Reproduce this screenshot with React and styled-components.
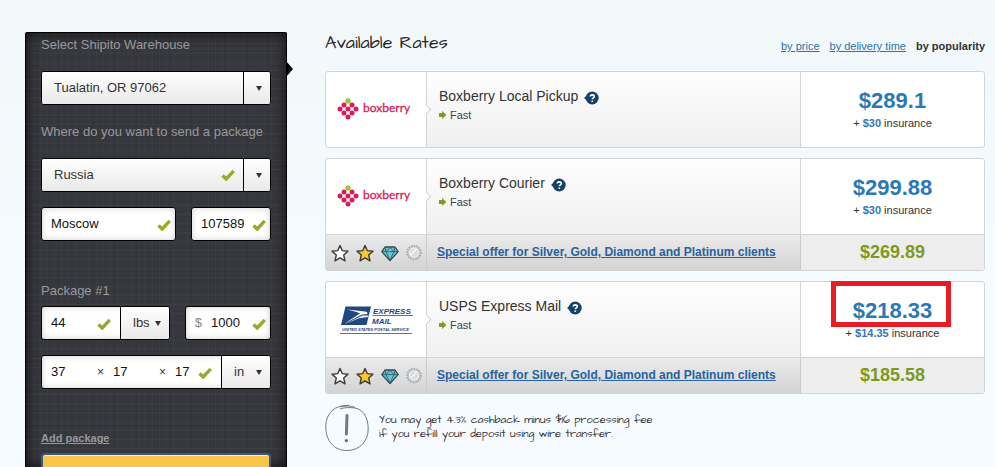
import React, { useState } from 'react';
import styled, { createGlobalStyle, css } from 'styled-components';

const GlobalStyle = createGlobalStyle`
  * {
    box-sizing: border-box;
  }

  body {
    margin: 0;
    background: linear-gradient(#f2f7fa, #f6fbff 300px);
    font-family: 'Liberation Sans', Arial, sans-serif;
    font-size: 13px;
    color: #333;
  }
`;

const Page = styled.div`
  display: flex;
  gap: 38px;
  height: 100vh;
  padding: 32px 10px 0 25px;
  overflow: hidden;
`;

const Sidebar = styled.form`
  position: relative;
  flex: 0 0 262px;
  min-width: 0;
  padding: 1px 15px 0;
  border: 1px solid #000;
  border-bottom: none;
  border-radius: 2px 2px 0 0;
  background:
    repeating-linear-gradient(90deg, rgba(255, 255, 255, 0.02) 0 1px, transparent 1px 7px),
    repeating-linear-gradient(0deg, rgba(0, 0, 0, 0.05) 0 1px, transparent 1px 5px),
    repeating-linear-gradient(90deg, rgba(0, 0, 0, 0.05) 0 1px, transparent 1px 11px),
    repeating-linear-gradient(0deg, rgba(255, 255, 255, 0.03) 0 1px, transparent 1px 9px),
    #37383d;
  box-shadow: inset 0 0 14px rgba(0, 0, 0, 0.75);

  &::after {
    content: '';
    position: absolute;
    top: 28px;
    left: 100%;
    border: 8px solid transparent;
    border-left: 7px solid #000;
    border-right: none;
  }
`;

const FieldLabel = styled.label`
  display: block;
  margin: ${(props) => props.$margin || '16px 0'};
  font-size: 13px;
  line-height: 21px;
  white-space: nowrap;
  color: #97989b;
`;

const FieldRow = styled.div`
  display: flex;
  gap: 15px;
  margin-bottom: 15px;
`;

const Group = styled.div`
  position: relative;
  display: flex;
  flex: ${(props) => props.$flex || '1'};
  min-width: 0;
  height: 34px;
  border: 1px solid #000;
  border-radius: 3px;
  background: #fff;
  box-shadow: inset 0 0 6px rgba(0, 0, 0, 0.2);
  overflow: hidden;
`;

const control = css`
  min-width: 0;
  height: 100%;
  border: none;
  outline: none;
  background: transparent;
  font-family: inherit;
  font-size: 13px;
  color: #333;
`;

const TextInput = styled.input`
  ${control}
  flex: ${(props) => props.$flex || '1'};
  padding: 0 0 2px 9px;
  color: #111;
`;

const Sign = styled.span`
  flex: none;
  width: ${(props) => props.$width || '7px'};
  text-align: right;
  font-size: ${(props) => props.$size || '12px'};
  line-height: 32px;
  color: ${(props) => props.$color || '#333'};
`;

const SelectBox = styled.div`
  position: relative;
  flex: ${(props) => props.$flex || '1'};
  border-left: ${(props) => (props.$divided ? '1px solid #000' : 'none')};
  background: linear-gradient(#fff, #e9e9e9);
`;

const Select = styled.select`
  ${control}
  width: 100%;
  padding: 0 ${(props) => (props.$short ? '12px' : '28px')} 2px 12px;
  appearance: none;
`;

const Caret = styled.span`
  position: absolute;
  top: 0;
  right: 0;
  display: flex;
  align-items: center;
  justify-content: center;
  width: ${(props) => (props.$line ? '27px' : '22px')};
  height: 100%;
  padding-left: ${(props) => (props.$line ? '4px' : '0')};
  border-left: ${(props) => (props.$line ? '1px solid #000' : 'none')};
  pointer-events: none;

  &::before {
    content: '';
    border: 3px solid transparent;
    border-top: 5px solid #333;
    border-bottom: none;
  }
`;

const CheckIcon = styled.svg`
  flex: none;
  align-self: center;
  width: 14px;
  height: 12px;
  margin: 2px ${(props) => props.$right || '4px'} 0 0;
`;

const OverCheck = styled(CheckIcon)`
  position: absolute;
  top: 10px;
  right: 35px;
  margin: 0;
  pointer-events: none;
`;

const AddLink = styled.a`
  display: inline-block;
  margin-top: 25px;
  font-size: 11px;
  font-weight: bold;
  line-height: 18px;
  color: #97989b;
`;

const SubmitButton = styled.button`
  display: block;
  width: 100%;
  height: 42px;
  margin-top: 6px;
  border: 2px solid #3c5788;
  border-radius: 4px;
  background: #f8c548;
  box-shadow: inset 0 1px 0 #fdeebd;
`;

const Main = styled.main`
  flex: 1;
  min-width: 0;
`;

const MainHeader = styled.header`
  display: flex;
  align-items: flex-start;
  justify-content: space-between;
  height: 28px;
  margin-bottom: 11px;
`;

const Heading = styled.h1`
  margin: 0;
  font-family: 'Architects Daughter', Lato, sans-serif;
  font-size: 18px;
  font-weight: normal;
  line-height: 22px;
  color: #2a2a2a;
`;

const SortList = styled.nav`
  display: flex;
  gap: 10px;
  font-size: 11px;
  line-height: 28px;

  a {
    color: #2a74ae;
  }
`;

const RateList = styled.ul`
  display: flex;
  flex-direction: column;
  gap: 10px;
  margin: 0;
  padding: 0;
  list-style: none;
`;

const RateCard = styled.li`
  border: 1px solid #d2d4d5;
  border-radius: 3px;
  background: #fff;
`;

const RateRow = styled.div`
  display: grid;
  grid-template-columns: 100px 1fr 183px;
  height: 75px;
`;

const LogoCell = styled.div`
  display: flex;
  align-items: center;
  padding-left: 10px;
`;

const InfoCell = styled.div`
  position: relative;
  padding: 14px 12px;
  border: solid #d2d4d5;
  border-width: 0 1px;
  background: linear-gradient(#fefefe, #f0f0f0);

  &::before {
    content: '';
    position: absolute;
    top: 34px;
    left: -4px;
    width: 6px;
    height: 6px;
    border: solid #d2d4d5;
    border-width: 1px 1px 0 0;
    background: #fff;
    transform: rotate(45deg);
  }
`;

const RateName = styled.h2`
  display: flex;
  align-items: center;
  gap: 6px;
  margin: 0;
  font-size: 14px;
  font-weight: normal;
  line-height: 20px;
`;

const Speed = styled.p`
  display: flex;
  align-items: center;
  gap: 3px;
  margin: 0;
  font-size: 11px;
  line-height: 18px;
  color: #444;
`;

const HelpButton = styled.button`
  display: flex;
  margin: 4px 0 0;
  padding: 0;
  border: none;
  background: none;
`;

const PriceCell = styled.div`
  padding-top: 17px;
  text-align: center;
`;

const Price = styled.strong`
  position: relative;
  display: inline-block;
  font-size: 22px;
  line-height: 24px;
  color: #2a78b4;

  ${(props) =>
    props.$marked &&
    css`
      &::after {
        content: '';
        position: absolute;
        inset: -18px -19px -4px -22px;
        border: 5px solid #e81c24;
      }
    `}
`;

const Insurance = styled.p`
  margin: 0;
  font-size: 11px;
  line-height: 20px;

  b {
    color: #3a74ae;
  }
`;

const OfferRow = styled.div`
  display: grid;
  grid-template-columns: 100px 1fr 183px;
  height: 36px;
  border-top: 1px solid #d2d4d5;
  background: linear-gradient(#ebebeb, #d3d3d3);
`;

const Badges = styled.div`
  display: flex;
  align-items: center;
  gap: 7px;
  padding-left: 5px;
`;

const OfferText = styled.div`
  padding-left: 10px;
  border: solid #c8cacb;
  border-width: 0 1px;
  font-size: 12px;
  font-weight: bold;
  line-height: 34px;
  white-space: nowrap;

  a {
    color: #2862a0;
  }
`;

const OfferPrice = styled.strong`
  background: #ededed;
  font-size: 18px;
  line-height: 34px;
  text-align: center;
  color: #7c9a1c;
`;

const Note = styled.div`
  display: flex;
  gap: 10px;
  margin-top: 10px;
  font-family: 'Architects Daughter', Lato, sans-serif;
  font-size: 11px;
  line-height: 14px;
  color: #333;

  p {
    margin: 9px 0 0;
  }
`;

const checkPath = <path d="M1.5 6.5L5.2 10L12.8 1.8" fill="none" stroke="#95ab2c" strokeWidth="3.4" />;

const Check = (props) => (
  <CheckIcon viewBox="0 0 14 12" aria-hidden="true" {...props}>
    {checkPath}
  </CheckIcon>
);

const BoxberryLogo = () => {
  const dots = [
    [8, 7], [16, 7],
    [4, 11], [12, 11], [20, 11],
    [8, 15], [16, 15],
    [12, 19],
  ];

  return (
    <svg width="78" height="24" viewBox="0 0 78 24" role="img" aria-label="boxberry">
      <circle cx="12" cy="3" r="2.7" fill="#9fc53c" />
      {dots.map(([x, y]) => (
        <circle key={`${x}-${y}`} cx={x} cy={y} r="2.5" fill="#d91b56" />
      ))}
      <text x="27" y="14" fontFamily="Lato, sans-serif" fontSize="12" fill="#d91b56" stroke="#d91b56" strokeWidth="0.3">
        boxberry
      </text>
    </svg>
  );
};

const UspsLogo = () => (
  <svg width="80" height="32" viewBox="-4 0 80 32" role="img" aria-label="USPS Express Mail">
    <path d="M5.5 2.5H31L26.5 21H1z" fill="#21477f" />
    <path d="M7 5.5L25 7.5C28 8 28 10 26.5 10.3L22 10.6L4.5 19.5L20 9.6C18 8.3 12 7 7 5.5z" fill="#fff" />
    <path d="M22.5 11.6L28.6 11.4L28.2 13L19 14.2L4 20.5z" fill="#e9eef6" />
    <g fontFamily="Liberation Sans, Arial, sans-serif" fontWeight="bold" fontStyle="italic" fill="#21477f">
      <text x="33" y="10" fontSize="8">EXPRESS</text>
      <text x="32" y="20" fontSize="8">MAIL</text>
      <text x="2" y="27" fontSize="4">UNITED STATES POSTAL SERVICE</text>
    </g>
    <path d="M32.5 11.5H73M0 29.5H72" stroke="#d4473f" strokeWidth="1" />
  </svg>
);

const starPath = 'M9 1.4L11.2 6.6L17 7.2L12.7 11L14 16.8L9 13.8L4 16.8L5.3 11L1 7.2L6.8 6.6z';

const Star = ({ fill, label }) => (
  <svg width="18" height="18" viewBox="0 0 18 18" role="img" aria-label={label}>
    <path d={starPath} fill={fill} stroke="#3a3a3a" strokeWidth="1.4" strokeLinejoin="round" />
  </svg>
);

const Diamond = () => (
  <svg width="18" height="18" viewBox="0 0 18 18" role="img" aria-label="Diamond">
    <path d="M4 3H14L17.2 7.6L9 16.6L0.8 7.6z" fill="#69c3d4" stroke="#34474d" strokeWidth="1.3" strokeLinejoin="round" />
    <path d="M1 7.6H17M5 7.6L9 16L13 7.6L9 3.4L5 7.6L4 3.4M13 7.6L14 3.4" fill="none" stroke="#34606b" strokeWidth="0.9" />
  </svg>
);

const Platinum = () => (
  <svg width="16" height="18" viewBox="0 0 16 18" role="img" aria-label="Platinum">
    <circle cx="8" cy="8.6" r="6.8" fill="#c3c8cb" />
    <circle cx="8" cy="8.6" r="7" fill="none" stroke="#9ea5a9" strokeWidth="1.6" strokeDasharray="1.4 1.3" />
    <circle cx="8" cy="8.6" r="4.6" fill="#d9dddf" stroke="#f8f8f8" strokeWidth="1" />
    <path d="M4.8 11L10.8 5" stroke="#f4f6f7" strokeWidth="1.6" />
  </svg>
);

const Help = () => (
  <HelpButton type="button" aria-label="About this rate">
    <svg width="15" height="14" viewBox="0 0 15 14">
      <path d="M0 7L4 3.6V10.4z" fill="#15416b" />
      <circle cx="8.2" cy="7" r="6.5" fill="#15416b" />
      <path d="M6.3 5.6C6.3 3.3 10.3 3.3 10.3 5.5C10.3 6.9 8.3 6.9 8.3 8.3M8.3 9.4V11" fill="none" stroke="#fff" strokeWidth="1.6" />
    </svg>
  </HelpButton>
);

const Arrow = () => (
  <svg width="8" height="8" viewBox="0 0 8 8" aria-hidden="true">
    <path d="M0 2H3V0L7.4 4L3 8V6H0z" fill="#7f9a2a" />
  </svg>
);

const NoteIcon = () => (
  <svg width="44" height="48" viewBox="0 0 44 48" fill="none" stroke="#77797b" aria-hidden="true">
    <path d="M24 1.4C10 0.6 1 9 0.8 22C0.6 37 9 46.5 22 46.5C35 46.5 43.2 37 43.2 25C43.2 12 37 3.5 26 3.6C21 3.4 18 4 15 5M30 3.4C26 1.6 20 1.6 15 3" />
    <path d="M22 11.5L21.4 30" strokeWidth="3" strokeLinecap="round" />
    <circle cx="21.4" cy="36.6" r="1.6" fill="#666" stroke="none" />
  </svg>
);

const rates = [
  { name: 'Boxberry Local Pickup', logo: BoxberryLogo, price: '$289.1', insurance: '$30' },
  { name: 'Boxberry Courier', logo: BoxberryLogo, price: '$299.88', insurance: '$30', offer: '$269.89' },
  { name: 'USPS Express Mail', logo: UspsLogo, price: '$218.33', insurance: '$14.35', offer: '$185.58', marked: true },
];

const Rate = ({ rate }) => {
  const Logo = rate.logo;

  return (
    <RateCard>
      <RateRow>
        <LogoCell>
          <Logo />
        </LogoCell>
        <InfoCell>
          <RateName>
            {rate.name}
            <Help />
          </RateName>
          <Speed>
            <Arrow />
            Fast
          </Speed>
        </InfoCell>
        <PriceCell>
          <Price $marked={rate.marked}>{rate.price}</Price>
          <Insurance>
            + <b>{rate.insurance}</b> insurance
          </Insurance>
        </PriceCell>
      </RateRow>
      {rate.offer && (
        <OfferRow>
          <Badges>
            <Star fill="#fdfdfd" label="Silver" />
            <Star fill="#f9c82e" label="Gold" />
            <Diamond />
            <Platinum />
          </Badges>
          <OfferText>
            <a href="#offer">Special offer for Silver, Gold, Diamond and Platinum clients</a>
          </OfferText>
          <OfferPrice>{rate.offer}</OfferPrice>
        </OfferRow>
      )}
    </RateCard>
  );
};

const RateForm = () => {
  const [form, setForm] = useState({
    city: 'Moscow',
    zip: '107589',
    weight: '44',
    value: '1000',
    length: '37',
    width: '17',
    height: '17',
  });

  const field = (name, label) => ({
    name,
    'aria-label': label,
    value: form[name],
    onChange: (e) => setForm({ ...form, [name]: e.target.value }),
  });

  return (
    <Sidebar>
      <FieldLabel htmlFor="warehouse" $margin="0 0 16px">
        Select Shipito Warehouse
      </FieldLabel>
      <Group>
        <SelectBox>
          <Select id="warehouse">
            <option>Tualatin, OR 97062</option>
          </Select>
          <Caret $line />
        </SelectBox>
      </Group>

      <FieldLabel htmlFor="country">Where do you want to send a package</FieldLabel>
      <FieldRow>
        <Group>
          <SelectBox>
            <Select id="country">
              <option>Russia</option>
            </Select>
            <OverCheck viewBox="0 0 14 12" aria-hidden="true">
              {checkPath}
            </OverCheck>
            <Caret $line />
          </SelectBox>
        </Group>
      </FieldRow>
      <FieldRow>
        <Group>
          <TextInput {...field('city', 'City')} />
          <Check />
        </Group>
        <Group $flex="0 0 80px">
          <TextInput {...field('zip', 'Postal code')} />
          <Check />
        </Group>
      </FieldRow>

      <FieldLabel htmlFor="weight" $margin="39px 0 5px">
        Package #1
      </FieldLabel>
      <FieldRow>
        <Group>
          <TextInput id="weight" {...field('weight', 'Weight')} />
          <Check $right="9px" />
          <SelectBox $flex="0 0 49px" $divided>
            <Select $short aria-label="Weight unit">
              <option>lbs</option>
            </Select>
            <Caret />
          </SelectBox>
        </Group>
        <Group $flex="0 0 86px">
          <Sign $width="16px" $size="13px" $color="#888">$</Sign>
          <TextInput {...field('value', 'Value')} />
          <Check />
        </Group>
      </FieldRow>
      <FieldRow>
        <Group>
          <TextInput $flex="0 0 55px" {...field('length', 'Length')} />
          <Sign>×</Sign>
          <TextInput $flex="0 0 55px" {...field('width', 'Width')} />
          <Sign>×</Sign>
          <TextInput {...field('height', 'Height')} />
          <Check $right="9px" />
          <SelectBox $flex="0 0 49px" $divided>
            <Select $short aria-label="Size unit">
              <option>in</option>
            </Select>
            <Caret />
          </SelectBox>
        </Group>
      </FieldRow>

      <AddLink href="#add">Add package</AddLink>
      <SubmitButton type="button" aria-label="Calculate" />
    </Sidebar>
  );
};

const App = () => (
  <>
    <GlobalStyle />
    <Page>
      <RateForm />
      <Main>
        <MainHeader>
          <Heading>Available Rates</Heading>
          <SortList aria-label="Sort rates">
            <a href="#price">by price</a>
            <a href="#time">by delivery time</a>
            <strong>by popularity</strong>
          </SortList>
        </MainHeader>
        <RateList>
          {rates.map((rate) => (
            <Rate key={rate.name} rate={rate} />
          ))}
        </RateList>
        <Note>
          <NoteIcon />
          <p>
            You may get 4.3% cashback minus $16 processing fee
            <br />
            if you refill your deposit using wire transfer.
          </p>
        </Note>
      </Main>
    </Page>
  </>
);

export default App;
